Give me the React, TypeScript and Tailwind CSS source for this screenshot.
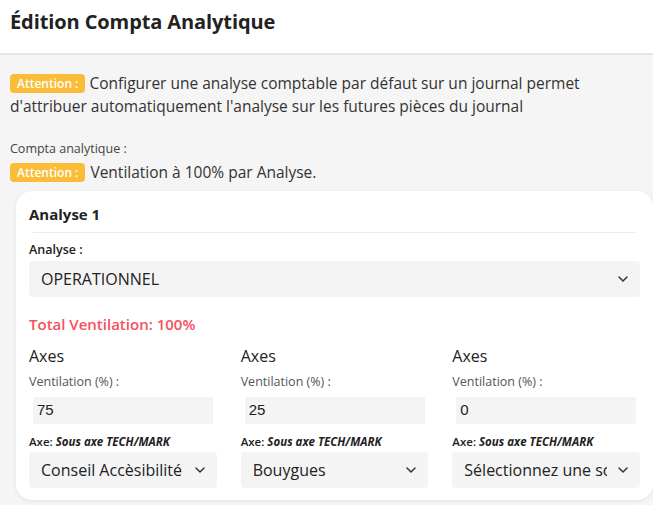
import { ChevronDown } from "lucide-react";

const axes = [
  { ventilation: "75", value: "Conseil Accèsibilité" },
  { ventilation: "25", value: "Bouygues" },
  { ventilation: "0", value: "Sélectionnez une sous-section" },
];

const Badge = () => (
  <span className="inline-block h-[19px] rounded-[4px] bg-[#fbbc37] px-[7px] align-[1px] text-[12px] leading-[19px] font-semibold text-white">
    Attention :
  </span>
);

const SelectBox = ({ value, className = "" }: { value: string; className?: string }) => (
  <div className={`flex h-9 items-center rounded-[4px] bg-[#f4f4f4] pl-3 pr-[9px] ${className}`}>
    <span className="min-w-0 flex-1 overflow-hidden whitespace-nowrap text-[16px] text-[#222]">{value}</span>
    <ChevronDown className="ml-2 h-4 w-4 shrink-0 text-[#333]" strokeWidth={2.2} />
  </div>
);

export default function App() {
  return (
    <div className="h-[505px] w-[653px] overflow-hidden bg-[#f5f5f5] font-['Open_Sans',sans-serif] text-[#333]">
      <header className="h-[55px] border-b-2 border-[#e6e6e6] bg-white px-[10px] pt-[7px]">
        <h1 className="text-[20px] font-bold tracking-[-0.1px] text-[#222]">Édition Compta Analytique</h1>
      </header>

      <div className="px-[10px] pt-[17px]">
        <p className="text-[15.5px] leading-[23px] text-[#333]">
          <Badge /> Configurer une analyse comptable par défaut sur un journal permet d'attribuer automatiquement
          l'analyse sur les futures pièces du journal
        </p>

        <p className="mt-[22px] text-[12.5px] text-[#444]">Compta analytique :</p>
        <p className="mt-[2px] flex items-center gap-[5px] text-[15.5px]">
          <Badge /> Ventilation à 100% par Analyse.
        </p>
      </div>

      <div className="ml-4 mt-[7px] rounded-2xl bg-white px-[13px] pb-3 pt-[12px] shadow-[0_1px_4px_rgba(0,0,0,0.08)]">
        <h2 className="text-[15px] font-bold text-[#222]">Analyse 1</h2>
        <div className="mx-1 mt-[6px] border-t border-[#ececec]" />

        <p className="mt-[8px] text-[12.5px] font-semibold text-[#222]">Analyse :</p>
        <SelectBox value="OPERATIONNEL" className="mt-[2px]" />

        <p className="mt-[16px] text-[15px] font-semibold text-[#f5505e]">Total Ventilation: 100%</p>

        <div className="mt-[8px] grid grid-cols-3 gap-[24px]">
          {axes.map((axe, i) => (
            <div key={i} className="flex flex-col">
              <h3 className="text-[16px] font-medium text-[#222]">Axes</h3>
              <p className="mt-[5px] text-[12.5px] text-[#555]">Ventilation (%) :</p>
              <div className="ml-1 mt-[5px] flex h-[27px] w-[180px] items-center bg-[#f4f4f4] px-1 font-['Liberation_Sans',sans-serif] text-[15px] text-[#222]">
                {axe.ventilation}
              </div>
              <p className="mt-[9px] text-[11.5px] font-semibold text-[#222]">
                Axe: <em className="font-bold">Sous axe TECH/MARK</em>
              </p>
              <SelectBox value={axe.value} className="mt-[2px]" />
            </div>
          ))}
        </div>
      </div>
    </div>
  );
}
